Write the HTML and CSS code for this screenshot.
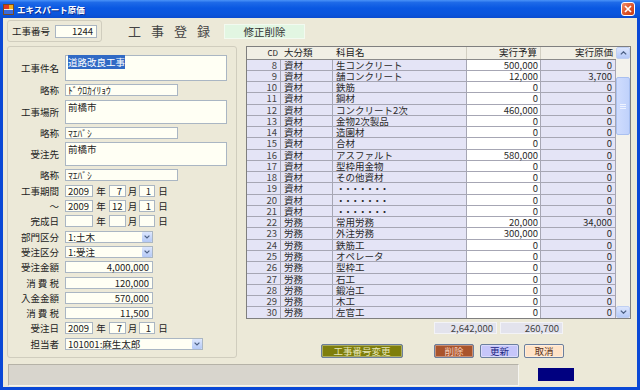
FILE: index.html
```html
<!DOCTYPE html>
<html lang="ja">
<head>
    <meta charset="UTF-8">
    <title>エキスパート原価</title>
    <link rel="stylesheet" href="styles.css">
</head>
<body>
<div class="window">
    <!-- Title bar -->
    <div class="titlebar">
        <svg class="app-icon" width="11" height="11" viewBox="0 0 11 11">
            <rect x="0.5" y="0.5" width="10" height="10" fill="#f4f0e0" stroke="#7a4a20"/>
            <rect x="1" y="1" width="5" height="4" fill="#e03a1e"/>
            <rect x="6" y="1" width="4" height="4" fill="#f0b020"/>
            <rect x="1" y="6" width="9" height="4" fill="#3a6ad8"/>
        </svg>
        <span class="title">エキスパート原価</span>
        <span class="close-btn">
            <svg width="8" height="8" viewBox="0 0 8 8"><path d="M1 1L7 7M7 1L1 7" stroke="#fff" stroke-width="1.7"/></svg>
        </span>
    </div>

    <div class="client">
        <!-- Header -->
        <div class="top-row">
            <div class="group code-group">
                <span class="code-lbl">工事番号</span>
                <div class="field num code-field">1244</div>
            </div>
            <h1 class="page-title">工事登録</h1>
            <div class="mode-box">修正削除</div>
        </div>

        <div class="main-row">
            <!-- Left form -->
            <div class="group form-panel">
                <div class="frow h26"><span class="lbl">工事件名</span><div class="field area w162"><span class="sel">道路改良工事</span></div></div>
                <div class="frow"><span class="lbl">略称</span><div class="field w113">ﾄﾞｳﾛｶｲﾘｮｳ</div></div>
                <div class="frow h24"><span class="lbl">工事場所</span><div class="field area w162">前橋市</div></div>
                <div class="frow"><span class="lbl">略称</span><div class="field w113">ﾏｴﾊﾞｼ</div></div>
                <div class="frow h24"><span class="lbl">受注先</span><div class="field area w162">前橋市</div></div>
                <div class="frow"><span class="lbl">略称</span><div class="field w113">ﾏｴﾊﾞｼ</div></div>
                <div class="frow">
                    <span class="lbl">工事期間</span>
                    <div class="field num yy">2009</div><span class="unit u-y">年</span>
                    <div class="field num mm">7</div><span class="unit u-m">月</span>
                    <div class="field num dd">1</div><span class="unit u-d">日</span>
                </div>
                <div class="frow">
                    <span class="lbl">～</span>
                    <div class="field num yy">2009</div><span class="unit u-y">年</span>
                    <div class="field num mm">12</div><span class="unit u-m">月</span>
                    <div class="field num dd">1</div><span class="unit u-d">日</span>
                </div>
                <div class="frow">
                    <span class="lbl">完成日</span>
                    <div class="field num yy"></div><span class="unit u-y">年</span>
                    <div class="field num mm"></div><span class="unit u-m">月</span>
                    <div class="field num dd"></div><span class="unit u-d">日</span>
                </div>
                <div class="frow"><span class="lbl">部門区分</span>
                    <div class="field select w88"><span>1:土木</span><span class="drop"><svg width="6" height="4" viewBox="0 0 6 4"><path d="M0.6 0.6L3 3L5.4 0.6" fill="none" stroke="#4d6185" stroke-width="1.2"/></svg></span></div>
                </div>
                <div class="frow"><span class="lbl">受注区分</span>
                    <div class="field select w88"><span>1:受注</span><span class="drop"><svg width="6" height="4" viewBox="0 0 6 4"><path d="M0.6 0.6L3 3L5.4 0.6" fill="none" stroke="#4d6185" stroke-width="1.2"/></svg></span></div>
                </div>
                <div class="frow"><span class="lbl">受注金額</span><div class="field num w88">4,000,000</div></div>
                <div class="frow"><span class="lbl">消 費 税</span><div class="field num w88">120,000</div></div>
                <div class="frow"><span class="lbl">入金金額</span><div class="field num w88">570,000</div></div>
                <div class="frow"><span class="lbl">消 費 税</span><div class="field num w88">11,500</div></div>
                <div class="frow">
                    <span class="lbl">受注日</span>
                    <div class="field num yy">2009</div><span class="unit u-y">年</span>
                    <div class="field num mm">7</div><span class="unit u-m">月</span>
                    <div class="field num dd">1</div><span class="unit u-d">日</span>
                </div>
                <div class="frow"><span class="lbl">担当者</span>
                    <div class="field select w138"><span>101001:麻生太郎</span><span class="drop"><svg width="6" height="4" viewBox="0 0 6 4"><path d="M0.6 0.6L3 3L5.4 0.6" fill="none" stroke="#4d6185" stroke-width="1.2"/></svg></span></div>
                </div>
            </div>

            <!-- Right side: cost grid -->
            <div class="right-col">
                <div class="grid">
                    <div class="grid-body">
                        <div class="g-head">
                            <span class="h-cd">CD</span><span class="h-cat">大分類</span><span class="h-name">科目名</span><span class="h-bud">実行予算</span><span class="h-cost">実行原価</span>
                        </div>
                        <div class="g-row"><span class="c-cd">8</span><span class="c-cat">資材</span><span class="c-name">生コンクリート</span><span class="c-bud">500,000</span><span class="c-cost">0</span></div>
                        <div class="g-row"><span class="c-cd">9</span><span class="c-cat">資材</span><span class="c-name">舗コンクリート</span><span class="c-bud">12,000</span><span class="c-cost">3,700</span></div>
                        <div class="g-row"><span class="c-cd">10</span><span class="c-cat">資材</span><span class="c-name">鉄筋</span><span class="c-bud">0</span><span class="c-cost">0</span></div>
                        <div class="g-row"><span class="c-cd">11</span><span class="c-cat">資材</span><span class="c-name">鋼材</span><span class="c-bud">0</span><span class="c-cost">0</span></div>
                        <div class="g-row"><span class="c-cd">12</span><span class="c-cat">資材</span><span class="c-name">コンクリート2次</span><span class="c-bud">460,000</span><span class="c-cost">0</span></div>
                        <div class="g-row"><span class="c-cd">13</span><span class="c-cat">資材</span><span class="c-name">金物2次製品</span><span class="c-bud">0</span><span class="c-cost">0</span></div>
                        <div class="g-row"><span class="c-cd">14</span><span class="c-cat">資材</span><span class="c-name">造園材</span><span class="c-bud">0</span><span class="c-cost">0</span></div>
                        <div class="g-row"><span class="c-cd">15</span><span class="c-cat">資材</span><span class="c-name">合材</span><span class="c-bud">0</span><span class="c-cost">0</span></div>
                        <div class="g-row"><span class="c-cd">16</span><span class="c-cat">資材</span><span class="c-name">アスファルト</span><span class="c-bud">580,000</span><span class="c-cost">0</span></div>
                        <div class="g-row"><span class="c-cd">17</span><span class="c-cat">資材</span><span class="c-name">型枠用金物</span><span class="c-bud">0</span><span class="c-cost">0</span></div>
                        <div class="g-row"><span class="c-cd">18</span><span class="c-cat">資材</span><span class="c-name">その他資材</span><span class="c-bud">0</span><span class="c-cost">0</span></div>
                        <div class="g-row"><span class="c-cd">19</span><span class="c-cat">資材</span><span class="c-name dots">・・・・・・・</span><span class="c-bud">0</span><span class="c-cost">0</span></div>
                        <div class="g-row"><span class="c-cd">20</span><span class="c-cat">資材</span><span class="c-name dots">・・・・・・・</span><span class="c-bud">0</span><span class="c-cost">0</span></div>
                        <div class="g-row"><span class="c-cd">21</span><span class="c-cat">資材</span><span class="c-name dots">・・・・・・・</span><span class="c-bud">0</span><span class="c-cost">0</span></div>
                        <div class="g-row"><span class="c-cd">22</span><span class="c-cat">労務</span><span class="c-name">常用労務</span><span class="c-bud">20,000</span><span class="c-cost">34,000</span></div>
                        <div class="g-row"><span class="c-cd">23</span><span class="c-cat">労務</span><span class="c-name">外注労務</span><span class="c-bud">300,000</span><span class="c-cost">0</span></div>
                        <div class="g-row"><span class="c-cd">24</span><span class="c-cat">労務</span><span class="c-name">鉄筋工</span><span class="c-bud">0</span><span class="c-cost">0</span></div>
                        <div class="g-row"><span class="c-cd">25</span><span class="c-cat">労務</span><span class="c-name">オペレータ</span><span class="c-bud">0</span><span class="c-cost">0</span></div>
                        <div class="g-row"><span class="c-cd">26</span><span class="c-cat">労務</span><span class="c-name">型枠工</span><span class="c-bud">0</span><span class="c-cost">0</span></div>
                        <div class="g-row"><span class="c-cd">27</span><span class="c-cat">労務</span><span class="c-name">石工</span><span class="c-bud">0</span><span class="c-cost">0</span></div>
                        <div class="g-row"><span class="c-cd">28</span><span class="c-cat">労務</span><span class="c-name">鍛冶工</span><span class="c-bud">0</span><span class="c-cost">0</span></div>
                        <div class="g-row"><span class="c-cd">29</span><span class="c-cat">労務</span><span class="c-name">木工</span><span class="c-bud">0</span><span class="c-cost">0</span></div>
                        <div class="g-row"><span class="c-cd">30</span><span class="c-cat">労務</span><span class="c-name">左官工</span><span class="c-bud">0</span><span class="c-cost">0</span></div>
                        <div class="g-row"><span class="c-cd">31</span><span class="c-cat">労務</span><span class="c-name">軽工</span><span class="c-bud">0</span><span class="c-cost">0</span></div>
                    </div>
                    <!-- Scrollbar -->
                    <div class="vscroll">
                        <span class="sc-btn"><svg width="7" height="4" viewBox="0 0 7 4"><path d="M0.8 3.4L3.5 0.8L6.2 3.4" fill="none" stroke="#4d6185" stroke-width="1.3"/></svg></span>
                        <span class="sc-thumb"><i></i><i></i><i></i></span>
                        <span class="sc-btn sc-down"><svg width="7" height="4" viewBox="0 0 7 4"><path d="M0.8 0.6L3.5 3.2L6.2 0.6" fill="none" stroke="#4d6185" stroke-width="1.3"/></svg></span>
                    </div>
                </div>

                <div class="totals">
                    <div class="total">2,642,000</div>
                    <div class="total">260,700</div>
                </div>

                <div class="actions">
                    <span class="btn btn-renum">工事番号変更</span>
                    <span class="btn btn-del">削除</span>
                    <span class="btn btn-upd">更新</span>
                    <span class="btn btn-cancel">取消</span>
                </div>
            </div>
        </div>

        <!-- Status -->
        <div class="status-row">
            <div class="status-bar"></div>
            <div class="navy-box"></div>
        </div>
    </div>
</div>
</body>
</html>
```

FILE: styles.css
```css
* {
    box-sizing: border-box;
}

body {
    margin: 0;
    font-family: "Noto Sans CJK JP", "Noto Sans", sans-serif;
    font-size: 9.5px;
    color: #222;
    background: #ECE9D8;
}

/* Window frame */
.window {
    width: 640px;
    height: 390px;
    display: flex;
    flex-direction: column;
    background: #0A48D6;
    overflow: hidden;
}

.titlebar {
    flex: none;
    height: 18px;
    display: flex;
    align-items: center;
    padding: 0 5px 0 3px;
    background: linear-gradient(to bottom, #4A93F8 0%, #1E6AE8 14%, #0A58E2 45%, #0A55DC 78%, #0A4CD0 100%);
}

.app-icon {
    flex: none;
}

.title {
    margin-left: 3px;
    color: #fff;
    font-weight: bold;
    font-size: 8.5px;
    line-height: 18px;
    text-shadow: 1px 1px 0 #0A2A8C;
}

.close-btn {
    margin-left: auto;
    width: 14px;
    height: 14px;
    border: 1px solid #fff;
    border-radius: 3px;
    background: linear-gradient(135deg, #F09070 0%, #E05A30 45%, #C83A12 100%);
    display: flex;
    align-items: center;
    justify-content: center;
}

.client {
    flex: 1;
    margin: 0 3px 3px 3px;
    padding-left: 4px;
    background: #ECE9D8;
    display: flex;
    flex-direction: column;
}

/* Header row */
.top-row {
    margin-top: 2px;
    height: 22px;
    display: flex;
    align-items: center;
}

.group {
    border: 1px solid #D0CDBE;
    border-radius: 3px;
}

.code-group {
    width: 95px;
    height: 22px;
    display: flex;
    align-items: center;
    padding-left: 4px;
}

.code-lbl {
    width: 43px;
    line-height: 12px;
}

.code-group .code-field {
    width: 42px;
    height: 13px;
    line-height: 11px;
}

.page-title {
    margin: 0 0 0 26px;
    font-size: 13px;
    font-weight: normal;
    letter-spacing: 10px;
    line-height: 16px;
    color: #444;
}

.mode-box {
    margin-left: 4px;
    width: 81px;
    height: 15px;
    background: #E2F6E2;
    border: 1px solid #F2FAF0;
    text-align: center;
    font-size: 10.5px;
    line-height: 13px;
    color: #333;
}

/* Main area */
.main-row {
    margin-top: 4px;
    height: 312px;
    display: flex;
}

.form-panel {
    width: 230px;
    height: 312px;
    padding-top: 8px;
    display: flex;
    flex-direction: column;
    gap: 3.3px;
}

.frow {
    flex: none;
    height: 12px;
    display: flex;
    align-items: center;
}

.frow.h26 {
    height: 26px;
}

.frow.h24 {
    height: 24px;
}

.lbl {
    width: 51px;
    margin-right: 6px;
    text-align: right;
    white-space: nowrap;
    line-height: 12px;
}

.field {
    height: 100%;
    border: 1px solid #AAB6C3;
    background: #FFFFF4;
    padding: 0 2px;
    line-height: 10px;
    white-space: nowrap;
}

.field.area {
    padding-top: 1px;
}

.num {
    text-align: right;
    padding-right: 3px;
}

.sel {
    background: #316AC5;
    color: #fff;
}

.w162 { width: 162px; }
.w113 { width: 113px; }
.w88 { width: 88px; }
.w138 { width: 138px; }

.yy { width: 28px; }
.mm { width: 17px; }
.dd { width: 16px; }

.unit {
    text-align: center;
    line-height: 12px;
}

.u-y { width: 16px; }
.u-m { width: 13px; }
.u-d { width: 16px; }

.select {
    display: flex;
    align-items: center;
    padding-right: 0;
}

.drop {
    margin-left: auto;
    width: 10px;
    height: 10px;
    border-radius: 1px;
    background: linear-gradient(to bottom, #DCE6FD, #B4C9F6);
    display: flex;
    align-items: center;
    justify-content: center;
}

/* Grid */
.right-col {
    margin-left: 9px;
    width: 385px;
    display: flex;
    flex-direction: column;
}

.grid {
    height: 274px;
    border: 1px solid #7F7F7F;
    display: flex;
    overflow: hidden;
    background: #fff;
}

.grid-body {
    width: 369px;
    flex: none;
}

.g-head {
    height: 12.5px;
    display: flex;
    background: #F1EFE5;
    border-bottom: 1px solid #8A8A8A;
    line-height: 11px;
}

.g-head span {
    padding: 0 3px;
    white-space: nowrap;
}

.h-cd { width: 34px; text-align: right; font-size: 8px; }
.h-cat { width: 52px; }
.h-name { width: 134px; border-right: 1px solid #D2CFC2; }
.h-bud { width: 74px; text-align: right; border-right: 1px solid #D2CFC2; }
.h-cost { width: 75px; text-align: right; }

.g-row {
    height: 11.27px;
    display: flex;
}

.g-row span {
    border-right: 1px solid #A6A6B4;
    border-bottom: 1px solid #A6A6B4;
    background: #E4E4F6;
    padding: 0 3px;
    line-height: 10.27px;
    white-space: nowrap;
    color: #2A2A2A;
}

.g-row .c-cd { width: 34px; text-align: right; color: #444; }
.g-row .c-cat { width: 52px; }
.g-row .c-name { width: 134px; }
.g-row .c-bud { width: 74px; text-align: right; background: #fff; padding-right: 2px; }
.g-row .c-cost { width: 75px; text-align: right; }

.g-row .dots {
    letter-spacing: -2.2px;
}

.vscroll {
    width: 14px;
    flex: none;
    background: #F3F2EC;
    display: flex;
    flex-direction: column;
}

.sc-btn {
    height: 12px;
    border: 1px solid #C0D0F2;
    border-radius: 2px;
    background: linear-gradient(to bottom, #DCE6FD, #B6CAF7);
    display: flex;
    align-items: center;
    justify-content: center;
}

.sc-down {
    margin-top: auto;
}

.sc-thumb {
    margin-top: 18px;
    height: 58px;
    border: 1px solid #A9C0F0;
    border-radius: 2px;
    background: linear-gradient(to right, #CFDCFD, #C0D2FB);
    display: flex;
    flex-direction: column;
    align-items: center;
    justify-content: center;
    gap: 1px;
}

.sc-thumb i {
    width: 6px;
    height: 1px;
    background: #EEF3FF;
}

/* Totals */
.totals {
    margin-top: 3px;
    height: 12px;
    display: flex;
    gap: 3px;
    padding-left: 188px;
}

.total {
    width: 63px;
    background: #E3E3ED;
    border: 1px solid #F3F3F7;
    text-align: right;
    padding-right: 3px;
    line-height: 10px;
    color: #444;
}

/* Buttons */
.actions {
    margin-top: 10px;
    height: 14px;
    display: flex;
    padding-left: 75px;
}

.btn {
    height: 14px;
    border: 1px solid #6B7F9E;
    border-radius: 2px;
    box-shadow: inset 0 0 0 1px rgba(255, 255, 255, 0.35);
    text-align: center;
    line-height: 12px;
}

.btn-renum {
    width: 82px;
    background: #7E7E0C;
    color: #E6E6B8;
}

.btn-del {
    width: 40px;
    margin-left: 31px;
    background: #A9542C;
    color: #F5CDB8;
}

.btn-upd {
    width: 39px;
    margin-left: 6px;
    background: #C6C6FA;
    color: #1A237E;
}

.btn-cancel {
    width: 40px;
    margin-left: 5px;
    background: #FFE3C8;
    color: #5A3020;
}

/* Status */
.status-row {
    margin-top: 6px;
    display: flex;
}

.status-bar {
    margin-left: 1px;
    width: 511px;
    height: 22px;
    background: #D8D5CD;
    border: 1px solid;
    border-color: #B5B2A7 #F6F5F0 #F6F5F0 #B5B2A7;
}

.navy-box {
    margin: 4px 0 0 19px;
    width: 36px;
    height: 13px;
    background: #000080;
}
```
